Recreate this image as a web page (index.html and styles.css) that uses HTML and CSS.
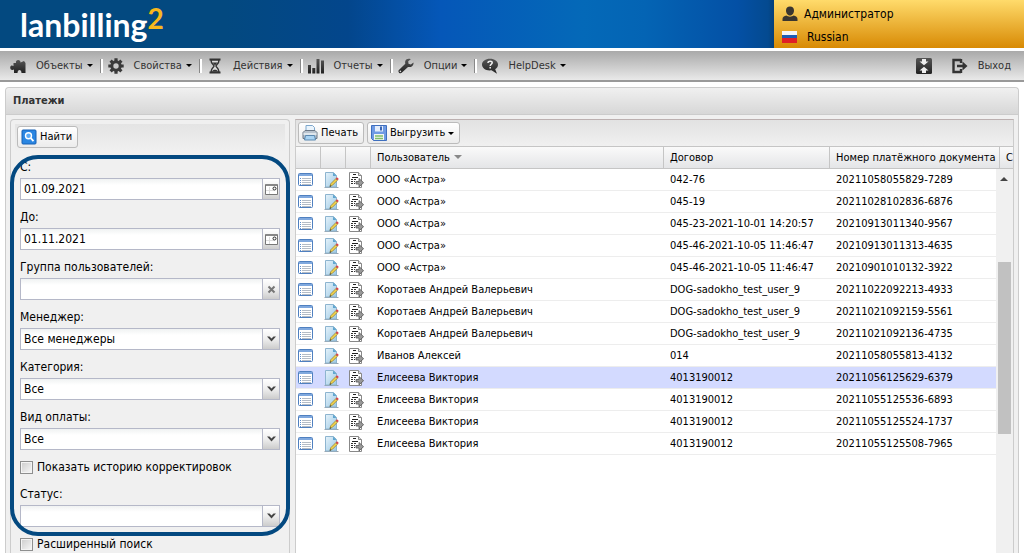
FILE: index.html
```html
<!DOCTYPE html>
<html lang="ru">
  <head>
    <meta charset="UTF-8" />
    <meta name="viewport" content="width=device-width, initial-scale=1.0" />
    <title>Платежи</title>
    <link rel="stylesheet" href="styles.css">
  </head>
  <body>
    <svg class="sprite" aria-hidden="true">
      <defs>
        <linearGradient id="g-dark" x1="0" y1="0" x2="0" y2="1">
          <stop offset="0" stop-color="#555" />
          <stop offset="1" stop-color="#222" />
        </linearGradient>
        <linearGradient id="g-page" x1="0" y1="0" x2="1" y2="1">
          <stop offset="0" stop-color="#e6f3fb" />
          <stop offset="1" stop-color="#9cc8e4" />
        </linearGradient>
      </defs>
      <symbol id="i-list" viewBox="0 0 16 16">
        <rect x="0.5" y="1.5" width="14" height="12" rx="1" fill="#fff" stroke="#4f80c0" />
        <path d="M1 2h13v2H1z" fill="#7fa8de" />
        <path d="M2 6.5h1M2 8.5h1M2 10.5h1M2 12.5h1" stroke="#5b8fd0" />
        <path d="M4 6.5h9M4 8.5h9M4 10.5h9M4 12.5h9" stroke="#b4bcc6" />
      </symbol>
      <symbol id="i-edit" viewBox="0 0 16 16">
        <path d="M1.500 15.500h14" stroke="#9aa4ac" />
        <path d="M2.500 0.500h8l3 3v11.500h-11z" fill="url(#g-page)" stroke="#8db4cf" />
        <path d="M10 0.500v3.500h3.500z" fill="#5fa5cf" />
        <path d="M7 14.300l.8-2.600 5-5 1.600 1.600-5 5z" fill="#f3d34a" stroke="#8f7a2a" stroke-width=".7" />
        <path d="M12.700 6.500l1.300-1.200 1.800 1.800-1.300 1.200z" fill="#d8434a" />
        <path d="M6.600 14.800l.5-1.500 1 1z" fill="#222" />
      </symbol>
      <symbol id="i-doc" viewBox="0 0 16 16">
        <path d="M1.500 0.500h9l3 3v12h-12z" fill="#fff" stroke="#888" />
        <path d="M10.500 0.500v3h3" fill="#ddd" stroke="#888" />
        <path d="M5 2.500h3M4 5.500h6" stroke="#222" />
        <path d="M3 7.500h2M6 7.500h2M3 9.500h2M6 9.500h1M3 11.500h2M6 11.500h1" stroke="#333" />
        <path d="M8 9.500h3V6.500l4.600 4.200-4.600 4.200V12H8z" fill="#999" stroke="#555" stroke-width=".8" />
      </symbol>
    </svg>

    <header class="top">
      <a class="logo" href="#">lanbilling<span class="logo-2">2</span></a>
      <div class="user">
        <div class="user-row">
          <svg width="16" height="16" viewBox="0 0 16 16"><path d="M8 .5C5.500.5 4 2 4 4.500s1.500 5 4 5 4-2.500 4-5S10.500.5 8 .5zM.5 15v-2c0-2 1.500-3 4-3.500C6 11 10 11 11.500 9.500c2.500.5 4 1.500 4 3.500v2z" fill="#3a3630" /></svg>
          <span>Администратор</span>
        </div>
        <div class="user-row lang">
          <svg width="16" height="12" viewBox="0 0 16 12"><path d="M0 0h15v4H0z" fill="#f6f6f6" /><path d="M0 4h15v4H0z" fill="#1c5cb4" /><path d="M0 7h15v5H0z" fill="#df1f26" /></svg>
          <span>Russian</span>
        </div>
      </div>
    </header>

    <nav class="menu">
      <button class="menu-item">
        <svg class="icon" viewBox="0 0 16 16"><path d="M3.500 5H6C5 1 11 1 10.500 4.500L14 3l1.500 2V15h-4c0-4-4-4-4 0H4v-3.500C2.500 12.500.2 12 .2 9.500S2.500 7 3.500 8z" fill="url(#g-dark)" /></svg>
        Объекты<i class="arrow"></i>
      </button>
      <button class="menu-item">
        <svg class="icon" viewBox="0 0 16 16"><g stroke="#3a3a3a" stroke-width="3.200"><path d="M8 .3v15.400M.3 8h15.400M2.600 2.600l10.800 10.800M13.400 2.600L2.600 13.400" /></g><circle cx="8" cy="8" r="5.700" fill="#3a3a3a" /><circle cx="8" cy="8" r="2.700" fill="#c9c9c9" /></svg>
        Свойства<i class="arrow"></i>
      </button>
      <button class="menu-item">
        <svg class="icon" viewBox="0 0 16 16"><path d="M2.500 1.500h11M2.500 14.500h11" stroke="#333" stroke-width="2" /><path d="M4 2c0 4 3 4.500 3 6s-3 2-3 6h8c0-4-3-4.500-3-6s3-2 3-6z" fill="#ddd" stroke="#333" stroke-width="1.400" /><path d="M5.500 4.500h5L8 7.500zM5 13.500c.5-2.500 5.500-2.500 6 0z" fill="#333" /></svg>
        Действия<i class="arrow"></i>
      </button>
      <button class="menu-item">
        <svg class="icon" viewBox="0 0 16 16"><path d="M0 7h3v8.500H0zM4.300 10h3v5.500h-3zM8.500 1h3v14.500h-3zM13 2.500h3v13h-3z" fill="url(#g-dark)" /></svg>
        Отчеты<i class="arrow"></i>
      </button>
      <button class="menu-item">
        <svg class="icon" viewBox="0 0 16 16"><path d="M15.500 4.500l-2.700 2-2.300-.8-.3-2.500 2.600-2C10.500.3 8 1 7.300 3c-.3 1-.2 1.800 0 2.700L.9 12c-1.500 1.600 1 4.300 2.800 2.800L10 8.900c3 .9 6-1.400 5.500-4.400zM2.400 14.200a.8.8 0 1 1 0-1.600.8.8 0 0 1 0 1.600z" fill="url(#g-dark)" /></svg>
        Опции<i class="arrow"></i>
      </button>
      <button class="menu-item">
        <svg class="icon" viewBox="0 0 16 16"><path d="M8 .8c4.500 0 8 2.500 8 5.800 0 2-1 3.700-2.800 4.700l1.800 4.500-5.500-3.500C4 13 0 10.500 0 6.600 0 3.300 3.500.8 8 .8z" fill="url(#g-dark)" /><path d="M6 5c0-2.600 4.200-2.300 4.200-.2C10.200 6.200 8.200 6 8.200 8M8.200 9v1.500" fill="none" stroke="#eee" stroke-width="1.500" /></svg>
        HelpDesk<i class="arrow"></i>
      </button>
      <span class="menu-fill"></span>
      <button class="menu-item collapse" aria-label="Свернуть">
        <svg class="icon" viewBox="0 0 16 16"><rect width="16" height="16" rx="1.500" fill="url(#g-dark)" /><path d="M6 1h4v2.500h2.500L8 7.200 3.500 3.500H6zM6 15h4v-2.500h2.500L8 8.800l-4.500 3.700H6z" fill="#eee" /></svg>
      </button>
      <button class="menu-item exit">
        <svg class="icon" viewBox="0 0 16 16"><path d="M9 2H1.500v12H9M9 1v4M9 11v4" fill="none" stroke="#333" stroke-width="2.400" /><path d="M5 6.800h5.500V3.600L15.500 8l-5 4.400V9.200H5z" fill="#333" /></svg>
        Выход
      </button>
    </nav>

    <main class="panel">
      <h1 class="panel-title">Платежи</h1>
      <div class="panel-body">
        <form class="filter">
          <div class="filter-bar">
            <button type="button" class="btn">
              <svg class="icon" viewBox="0 0 16 16"><rect x="1" y="1" width="14" height="14" rx="1" fill="#2a86e2" stroke="#1761b5" /><circle cx="7.500" cy="6.800" r="3" fill="#5aa9f5" stroke="#fff" stroke-width="1.400" /><path d="M9.800 9.200l2.700 3" stroke="#fff" stroke-width="1.800" /></svg>
              Найти
            </button>
          </div>
          <div class="fields">
            <label for="from">С:</label>
            <div class="box">
              <input id="from" type="text" value="01.09.2021">
              <button type="button" class="trigger" aria-label="Календарь"><svg width="13" height="13" viewBox="0 0 13 13"><path d="M.5 1.500h12v10H.5z" fill="#fff" stroke="#777" /><path d="M1 2h11" stroke="#888" stroke-width="2" /><path d="M4.500 4v7M1 7.500h8" stroke="#ddd" /><circle cx="9.500" cy="5.500" r="1.500" fill="#fff" stroke="#222" /></svg></button>
            </div>
            <label for="to">До:</label>
            <div class="box">
              <input id="to" type="text" value="01.11.2021">
              <button type="button" class="trigger" aria-label="Календарь"><svg width="13" height="13" viewBox="0 0 13 13"><path d="M.5 1.500h12v10H.5z" fill="#fff" stroke="#777" /><path d="M1 2h11" stroke="#888" stroke-width="2" /><path d="M4.500 4v7M1 7.500h8" stroke="#ddd" /><circle cx="9.500" cy="5.500" r="1.500" fill="#fff" stroke="#222" /></svg></button>
            </div>
            <label for="group">Группа пользователей:</label>
            <div class="box">
              <input id="group" type="text">
              <button type="button" class="trigger" aria-label="Очистить"><svg width="9" height="9" viewBox="0 0 9 9"><path d="M1.500 1.500l6 6M7.500 1.500l-6 6" stroke="#777" stroke-width="2" /></svg></button>
            </div>
            <label for="manager">Менеджер:</label>
            <div class="box">
              <select id="manager"><option>Все менеджеры</option></select>
              <span class="trigger"><svg width="9" height="6" viewBox="0 0 9 6"><path d="M0 .5h2.500l2 2 2-2H9L4.500 5.500z" fill="#444" /></svg></span>
            </div>
            <label for="category">Категория:</label>
            <div class="box">
              <select id="category"><option>Все</option></select>
              <span class="trigger"><svg width="9" height="6" viewBox="0 0 9 6"><path d="M0 .5h2.500l2 2 2-2H9L4.500 5.500z" fill="#444" /></svg></span>
            </div>
            <label for="paytype">Вид оплаты:</label>
            <div class="box">
              <select id="paytype"><option>Все</option></select>
              <span class="trigger"><svg width="9" height="6" viewBox="0 0 9 6"><path d="M0 .5h2.500l2 2 2-2H9L4.500 5.500z" fill="#444" /></svg></span>
            </div>
            <div class="check">
              <input id="history" type="checkbox">
              <label for="history">Показать историю корректировок</label>
            </div>
            <label for="status">Статус:</label>
            <div class="box">
              <select id="status"><option></option></select>
              <span class="trigger"><svg width="9" height="6" viewBox="0 0 9 6"><path d="M0 .5h2.500l2 2 2-2H9L4.500 5.500z" fill="#444" /></svg></span>
            </div>
          </div>
          <div class="check extended">
            <input id="extended" type="checkbox">
            <label for="extended">Расширенный поиск</label>
          </div>
        </form>

        <section class="grid">
          <div class="grid-bar">
            <button class="btn">
              <svg class="icon" viewBox="0 0 16 16"><path d="M4 7V.5h6.500l2 2V7z" fill="#eaf4fc" stroke="#7da7cc" /><path d="M1 7.500L3 5.500h10l2 2v6H1z" fill="#b9c3ce" stroke="#6b7786" /><path d="M1.500 8h13v2h-13z" fill="#dfe6ec" /><path d="M3.500 10.500h9l1 4.500h-11z" fill="#a9d3f3" stroke="#5a88b0" /></svg>
              Печать
            </button>
            <button class="btn">
              <svg class="icon" viewBox="0 0 16 16"><path d="M.5.500h15v15h-13l-2-2z" fill="#6f9be4" stroke="#3f6fbe" /><path d="M4 1h8v5.500H4z" fill="#e4eefc" /><path d="M9 1.500h2v4H9z" fill="#3a66b4" /><path d="M3 9h10v6H3z" fill="#f2f6f2" /><path d="M4 11h8M4 13.500h8" stroke="#7fbf6a" stroke-width="1.500" /></svg>
              Выгрузить<i class="arrow"></i>
            </button>
          </div>
          <div class="grid-view">
            <table>
              <colgroup><col class="c-icon"><col class="c-icon"><col class="c-icon"><col><col class="c-contract"><col class="c-number"><col class="c-last"></colgroup>
              <thead>
                <tr><th></th><th></th><th></th><th>Пользователь<i class="sort"></i></th><th>Договор</th><th>Номер платёжного документа</th><th>С</th></tr>
              </thead>
              <tbody>
                <tr><td><svg class="icon"><use href="#i-list" /></svg></td><td><svg class="icon"><use href="#i-edit" /></svg></td><td><svg class="icon"><use href="#i-doc" /></svg></td><td>ООО «Астра»</td><td>042-76</td><td>20211058055829-7289</td><td></td></tr>
                <tr><td><svg class="icon"><use href="#i-list" /></svg></td><td><svg class="icon"><use href="#i-edit" /></svg></td><td><svg class="icon"><use href="#i-doc" /></svg></td><td>ООО «Астра»</td><td>045-19</td><td>20211028102836-6876</td><td></td></tr>
                <tr><td><svg class="icon"><use href="#i-list" /></svg></td><td><svg class="icon"><use href="#i-edit" /></svg></td><td><svg class="icon"><use href="#i-doc" /></svg></td><td>ООО «Астра»</td><td>045-23-2021-10-01 14:20:57</td><td>20210913011340-9567</td><td></td></tr>
                <tr><td><svg class="icon"><use href="#i-list" /></svg></td><td><svg class="icon"><use href="#i-edit" /></svg></td><td><svg class="icon"><use href="#i-doc" /></svg></td><td>ООО «Астра»</td><td>045-46-2021-10-05 11:46:47</td><td>20210913011313-4635</td><td></td></tr>
                <tr><td><svg class="icon"><use href="#i-list" /></svg></td><td><svg class="icon"><use href="#i-edit" /></svg></td><td><svg class="icon"><use href="#i-doc" /></svg></td><td>ООО «Астра»</td><td>045-46-2021-10-05 11:46:47</td><td>20210901010132-3922</td><td></td></tr>
                <tr><td><svg class="icon"><use href="#i-list" /></svg></td><td><svg class="icon"><use href="#i-edit" /></svg></td><td><svg class="icon"><use href="#i-doc" /></svg></td><td>Коротаев Андрей Валерьевич</td><td>DOG-sadokho_test_user_9</td><td>20211022092213-4933</td><td></td></tr>
                <tr><td><svg class="icon"><use href="#i-list" /></svg></td><td><svg class="icon"><use href="#i-edit" /></svg></td><td><svg class="icon"><use href="#i-doc" /></svg></td><td>Коротаев Андрей Валерьевич</td><td>DOG-sadokho_test_user_9</td><td>20211021092159-5561</td><td></td></tr>
                <tr><td><svg class="icon"><use href="#i-list" /></svg></td><td><svg class="icon"><use href="#i-edit" /></svg></td><td><svg class="icon"><use href="#i-doc" /></svg></td><td>Коротаев Андрей Валерьевич</td><td>DOG-sadokho_test_user_9</td><td>20211021092136-4735</td><td></td></tr>
                <tr><td><svg class="icon"><use href="#i-list" /></svg></td><td><svg class="icon"><use href="#i-edit" /></svg></td><td><svg class="icon"><use href="#i-doc" /></svg></td><td>Иванов Алексей</td><td>014</td><td>20211058055813-4132</td><td></td></tr>
                <tr class="selected"><td><svg class="icon"><use href="#i-list" /></svg></td><td><svg class="icon"><use href="#i-edit" /></svg></td><td><svg class="icon"><use href="#i-doc" /></svg></td><td>Елисеева Виктория</td><td>4013190012</td><td>20211056125629-6379</td><td></td></tr>
                <tr><td><svg class="icon"><use href="#i-list" /></svg></td><td><svg class="icon"><use href="#i-edit" /></svg></td><td><svg class="icon"><use href="#i-doc" /></svg></td><td>Елисеева Виктория</td><td>4013190012</td><td>20211055125536-6893</td><td></td></tr>
                <tr><td><svg class="icon"><use href="#i-list" /></svg></td><td><svg class="icon"><use href="#i-edit" /></svg></td><td><svg class="icon"><use href="#i-doc" /></svg></td><td>Елисеева Виктория</td><td>4013190012</td><td>20211055125524-1737</td><td></td></tr>
                <tr><td><svg class="icon"><use href="#i-list" /></svg></td><td><svg class="icon"><use href="#i-edit" /></svg></td><td><svg class="icon"><use href="#i-doc" /></svg></td><td>Елисеева Виктория</td><td>4013190012</td><td>20211055125508-7965</td><td></td></tr>
              </tbody>
            </table>
            <div class="scroll"><i class="scroll-up"></i><div class="thumb"></div></div>
          </div>
        </section>
      </div>
    </main>
  </body>
</html>
```
FILE: styles.css
```css
* {
  box-sizing: border-box;
}
body {
  display: flex;
  flex-direction: column;
  height: 100vh;
  margin: 0;
  overflow: hidden;
  background: #fff;
  color: #000;
  font: 11px/14px Tahoma, "DejaVu Sans Condensed", sans-serif;
}
button, input, select {
  margin: 0;
  font: inherit;
  color: inherit;
}
button {
  display: flex;
  align-items: center;
  white-space: nowrap;
}
svg {
  display: block;
  flex: none;
}
.sprite {
  position: absolute;
  width: 0;
  height: 0;
}
.icon {
  width: 16px;
  height: 16px;
}
.arrow {
  margin-left: 4px;
  border: 3px solid transparent;
  border-top-color: #000;
  border-bottom: 0;
}

/* шапка */
.top {
  display: flex;
  flex: none;
  justify-content: space-between;
  height: 48px;
  background: linear-gradient(90deg, #034980 0, #034980 22%, #03468c 34%, #0557b8 43%, #0469b8 57%, #0464b4 63%, #0450a5 72%, #044a90 75%, #04386a 76%);
}
.logo {
  display: flex;
  padding-left: 20px;
  color: #fff;
  font: bold 32px/50px Lato, sans-serif;
  text-decoration: none;
}
.logo-2 {
  color: #f7b81c;
  font-size: 28px;
  line-height: 36px;
}
.user {
  width: 250px;
  padding: 6px 8px;
  background: linear-gradient(#ffdb6b, #d88a04);
  font-size: 12px;
}
.user-row {
  display: flex;
  align-items: center;
  gap: 6px;
  height: 16px;
}
.lang {
  gap: 9px;
  margin-top: 7px;
}

/* главное меню */
.menu {
  display: flex;
  flex: none;
  height: 31px;
  margin-top: 3px;
  padding: 0 6px 0 2px;
  border-bottom: 2px solid #999;
  background: linear-gradient(#a9a9a9, #e9e9e9);
}
.menu-item {
  position: relative;
  padding: 0 7px 0 8px;
  border: 0;
  background: none;
  color: #333;
}
.menu-item .icon {
  margin-right: 10px;
}
.menu-item + .menu-item::before {
  content: "";
  position: absolute;
  left: 0;
  width: 2px;
  height: 14px;
  border-left: 1px solid #888;
  background: #fff;
}
.menu-fill {
  flex: 1;
}
.menu .collapse .icon {
  margin-right: 5px;
}

/* окно "Платежи" */
.panel {
  display: flex;
  flex: 1;
  flex-direction: column;
  min-height: 0;
  margin: 5px 5px 0;
  border: 1px solid #ccc;
  border-bottom: 0;
  border-radius: 4px 4px 0 0;
  background: #f0f0f0;
}
.panel-title {
  flex: none;
  height: 27px;
  margin: 0;
  padding-left: 7px;
  border-bottom: 1px solid #ccc;
  border-radius: 4px 4px 0 0;
  background: linear-gradient(#f0f0f0, #d7d7d7);
  color: #333;
  font-size: 11px;
  line-height: 26px;
}
.panel-body {
  display: flex;
  flex: 1;
  gap: 5px;
  min-height: 0;
  padding: 4px 4px 0;
}
.btn {
  gap: 3px;
  height: 22px;
  padding: 0 5px 0 3px;
  border: 1px solid #bbb;
  border-radius: 3px;
  background: linear-gradient(#fff, #ececec);
  font-size: 11px;
}
.btn .arrow {
  margin-left: 0;
}
.menu .exit::before {
  display: none;
}

/* фильтр */
.filter {
  flex: none;
  width: 280px;
  padding: 4px 0 0;
  border: 1px solid #ccc;
  border-bottom: 0;
  border-radius: 4px 4px 0 0;
  font-size: 12px;
}
.filter-bar {
  height: 27px;
  margin: 0 4px 4px;
  padding: 2px;
  background: linear-gradient(#e4e4e4, #f0f0f0);
}
.fields {
  position: relative;
  padding: 5px 9px 9px;
}
.fields::after {
  content: "";
  position: absolute;
  inset: 0 -1px;
  border: 4px solid #034980;
  border-radius: 28px;
  pointer-events: none;
}
.fields > label {
  display: block;
  height: 18px;
}
.box {
  position: relative;
  display: flex;
  height: 22px;
  margin-bottom: 10px;
}
.box:last-child {
  margin-bottom: 0;
}
.box input, .box select {
  flex: 1;
  min-width: 0;
  padding: 0 3px;
  appearance: none;
  border: 1px solid #b5b8c8;
  border-radius: 0;
  background: linear-gradient(#f0f2f2, #fff 6px);
}
.trigger {
  display: flex;
  align-items: center;
  justify-content: center;
  width: 17px;
  padding: 0;
  border: 1px solid #b5b8c8;
  border-left: 0;
  background: linear-gradient(#fff, #eee 50%, #ccc);
}
span.trigger {
  position: absolute;
  top: 0;
  right: 0;
  width: 18px;
  height: 22px;
  border-left: 1px solid #b5b8c8;
  pointer-events: none;
}
.check {
  display: flex;
  align-items: center;
  gap: 4px;
  height: 14px;
}
.fields .check {
  margin-bottom: 13px;
}
.check input {
  width: 13px;
  height: 13px;
  appearance: none;
  border: 1px solid #8e8f8f;
  background: linear-gradient(135deg, #ccc, #f8f8f8);
  box-shadow: inset 0 0 0 1px #f4f4f4;
}
.extended {
  margin: 1px 9px 0;
}

/* таблица платежей */
.grid {
  display: flex;
  flex: 1;
  flex-direction: column;
  min-width: 0;
  border: 1px solid #ccc;
  border-bottom: 0;
  border-top-color: #bcb0b0;
  background: #fff;
}
.grid-bar {
  display: flex;
  flex: none;
  gap: 3px;
  height: 26px;
  padding: 2px;
  background: linear-gradient(#e2e2e2, #f0f0f0);
}
.grid-view {
  position: relative;
  flex: 1;
  min-height: 0;
}
table {
  width: 100%;
  table-layout: fixed;
  border-collapse: separate;
  border-spacing: 0;
}
.c-icon {
  width: 25px;
}
.c-contract {
  width: 166px;
}
.c-number {
  width: 170px;
}
.c-last {
  width: 13px;
}
th {
  height: 23px;
  padding: 0 6px;
  overflow: hidden;
  border: 1px solid #c5c5c5;
  border-width: 1px 1px 1px 0;
  background: linear-gradient(#fafafa, #e4e5e7);
  font-weight: normal;
  text-align: left;
  white-space: nowrap;
}
th:last-child {
  padding-right: 0;
  border-right: 0;
}
td {
  height: 22px;
  padding: 0 6px;
  overflow: hidden;
  border-bottom: 1px solid #ededed;
  white-space: nowrap;
}
td:nth-child(-n+3) {
  padding: 0 0 0 2px;
}
.selected td {
  background: #d3daff;
}
.sort {
  display: inline-block;
  margin: 0 0 2px 4px;
  border: 4px solid transparent;
  border-top-color: #888;
  border-bottom: 0;
}
.scroll {
  position: absolute;
  top: 23px;
  right: 0;
  bottom: 0;
  width: 17px;
  padding: 8px 2px 0;
  background: #f0f0f0;
}
.scroll-up {
  display: block;
  width: 8px;
  margin-left: 2px;
  border: 4px solid transparent;
  border-top: 0;
  border-bottom-color: #444;
}
.thumb {
  height: 172px;
  margin-top: 81px;
  background: #c1c1c1;
}
```
